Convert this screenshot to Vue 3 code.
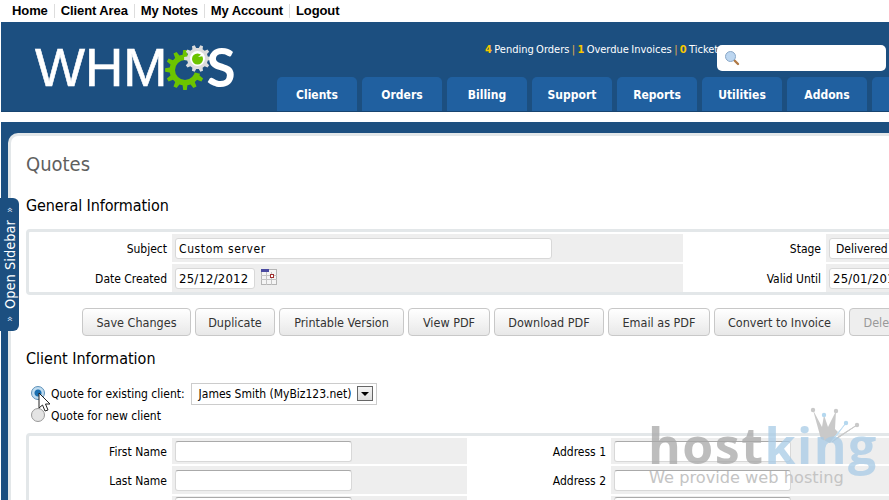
<script setup>
const topLinks = ['Home', 'Client Area', 'My Notes', 'My Account', 'Logout']
const tabs = ['Clients', 'Orders', 'Billing', 'Support', 'Reports', 'Utilities', 'Addons', '']
const buttons = [
  { t: 'Save Changes', w: 109 }, { t: 'Duplicate', w: 80 }, { t: 'Printable Version', w: 125 },
  { t: 'View PDF', w: 82 }, { t: 'Download PDF', w: 110 }, { t: 'Email as PDF', w: 102 },
  { t: 'Convert to Invoice', w: 131 }, { t: 'Delete', w: 66, off: true }
]
function gear(cx, cy, ro, ri, n) {
  let d = ''
  const step = (Math.PI * 2) / n
  for (let i = 0; i < n; i++) {
    const a = i * step
    const pts = [[a - step * 0.3, ri], [a - step * 0.17, ro], [a + step * 0.17, ro], [a + step * 0.3, ri]]
    for (const [an, r] of pts) {
      d += (d ? 'L' : 'M') + (cx + r * Math.cos(an)).toFixed(1) + ' ' + (cy + r * Math.sin(an)).toFixed(1)
    }
  }
  return d + 'Z'
}
const greenGear = gear(24, 31, 20, 15.5, 12)
const grayGear = gear(36.5, 19.5, 13.5, 10.5, 10)
</script>

<template>
  <div class="page">
    <nav class="top">
      <a v-for="l in topLinks" :key="l">{{ l }}</a>
    </nav>
    <header class="head">
      <div class="logo">
        <span class="whm">WHM</span>
        <svg class="gears" width="56" height="56" viewBox="0 0 56 56">
          <path :d="greenGear" fill="#6cc400" />
          <circle cx="24" cy="31" r="10" fill="#1c4f80" />
          <path d="M24 31L44 8L54 30L44 36Z" fill="#1c4f80" />
          <path :d="grayGear" fill="#dcdcdc" />
          <circle cx="36.5" cy="19.5" r="7.5" fill="#fff" />
          <circle cx="36.5" cy="20" r="5.5" fill="#6cc400" />
          <path d="M37 18L42 14L43 17Z" fill="#fff" />
        </svg>
        <span class="s">S</span>
      </div>
      <div class="right">
        <div class="stats">
          <b>4</b> Pending Orders <i>|</i> <b>1</b> Overdue Invoices <i>|</i> <b>0</b> Tickets Awaiting Reply
        </div>
        <div class="tabs">
          <a v-for="t in tabs" :key="t" class="tab">{{ t }}</a>
        </div>
      </div>
    </header>
    <div class="search">
      <svg width="16" height="16" viewBox="0 0 16 16">
        <line x1="9.5" y1="9.5" x2="14" y2="14" stroke="#b07a45" stroke-width="2.4" stroke-linecap="round" />
        <circle cx="6.5" cy="6.5" r="5" fill="#bcd6f0" stroke="#8aa8c8" />
      </svg>
    </div>

    <main class="frame">
      <div class="panel">
        <h1>Quotes</h1>
        <h2 class="first">General Information</h2>
        <div class="box general">
          <div class="lab">Subject</div>
          <div class="cell"><div class="inp wide">Custom server</div></div>
          <div class="lab">Stage</div>
          <div class="cell"><div class="inp sel">Delivered</div></div>
          <div class="lab">Date Created</div>
          <div class="cell">
            <div class="inp date">25/12/2012</div>
            <svg class="cal" width="16" height="16" viewBox="0 0 16 16">
              <rect x="0.5" y="0.5" width="15" height="15" fill="#f4f4f4" stroke="#b5b5b5" />
              <rect x="0" y="0" width="8" height="3" fill="#4a4aa0" />
              <path d="M0 6.5H16M0 10.5H16M5.5 3V16M10.5 3V16" stroke="#c4c4c4" />
              <rect x="9.5" y="5.5" width="3" height="3" fill="#fff" stroke="#a03030" />
            </svg>
          </div>
          <div class="lab">Valid Until</div>
          <div class="cell"><div class="inp date2">25/01/2013</div></div>
        </div>

        <div class="btns">
          <button v-for="b in buttons" :key="b.t" class="btn" :class="{ off: b.off }" :style="{ width: b.w + 'px' }">{{ b.t }}</button>
        </div>

        <h2 class="second">Client Information</h2>
        <div class="radio-row first-r">
          <span class="radio on"></span>
          <span>Quote for existing client:</span>
          <div class="select">
            James Smith (MyBiz123.net)
            <span class="arrow"></span>
          </div>
        </div>
        <div class="radio-row">
          <span class="radio"></span>
          <span>Quote for new client</span>
        </div>

        <div class="box client">
          <div class="lab">First Name</div>
          <div class="cell"><div class="inp name"></div></div>
          <div class="lab">Address 1</div>
          <div class="cell"><div class="inp name"></div></div>
          <div class="lab">Last Name</div>
          <div class="cell"><div class="inp name"></div></div>
          <div class="lab">Address 2</div>
          <div class="cell"><div class="inp name"></div></div>
          <div class="lab"></div>
          <div class="cell low"><div class="inp name"></div></div>
          <div class="lab"></div>
          <div class="cell low"><div class="inp name"></div></div>
        </div>
      </div>
    </main>

    <div class="side">
      <span class="mini">»</span><span class="side-t">Open Sidebar</span><span class="mini">»</span>
    </div>

    <svg class="cursor" width="14" height="22" viewBox="0 0 14 22">
      <path d="M1 1V16L4.5 13L7 19L10 18L7.5 12H12Z" fill="#fff" stroke="#222" stroke-width="1" stroke-linejoin="round" />
    </svg>

    <div class="mark">
      <svg class="crown" width="54" height="38" viewBox="0 0 54 38">
        <path d="M5 3L14 20L16 8L20 20L28 4L27 22L30 25L22 36L13 32Z" fill="#c9c9c9" />
        <path d="M38 16L24 33L29 28Z" fill="#c3dff2" stroke="#c3dff2" />
        <path d="M49 18L24 35L30 30Z" fill="#c9c9c9" stroke="#c9c9c9" />
        <circle cx="5" cy="3" r="2.2" fill="#c9c9c9" />
        <circle cx="16" cy="8" r="2.2" fill="#b5d8ef" />
        <circle cx="28" cy="4" r="2.2" fill="#c9c9c9" />
        <circle cx="38" cy="16" r="2.2" fill="#b5d8ef" />
        <circle cx="49" cy="18" r="2.2" fill="#c9c9c9" />
      </svg>
      <div class="mark-name"><span class="g">host</span><span class="b">king</span></div>
      <div class="mark-tag">We provide web hosting</div>
    </div>
  </div>
</template>

<style>
html, body { margin: 0; overflow: hidden; background: #fff; }
</style>

<style scoped>
.page {
  width: 889px; height: 500px; overflow: hidden; position: relative; background: #fff;
  font-family: "DejaVu Sans Condensed", "DejaVu Sans", sans-serif; font-stretch: condensed; font-size: 12px; color: #000;
}
.top { height: 22px; display: flex; align-items: center; padding-left: 12px; font-family: "Liberation Sans", sans-serif; font-stretch: normal; font-weight: 700; font-size: 13px; letter-spacing: -0.1px; }
.top a { padding-right: 6px; margin-right: 6px; border-right: 1px solid #ddd; line-height: 14px; }
.top a:last-child { border: 0; }
.head { margin-left: 1px; height: 90px; background: #1c4f80; display: flex; width: 1000px; box-sizing: border-box; border-bottom: 1px solid #174470; }
.logo { width: 276px; flex: none; display: flex; align-items: center; padding-left: 34px; box-sizing: border-box; color: #fff; line-height: 1; height: 90px; }
.whm { font: 400 53px/1 "Liberation Sans", sans-serif; -webkit-text-stroke: 0.6px #fff; }
.s { font: 700 53px/1 "Lato", sans-serif; margin-bottom: 2px; }
.gears { margin: 0 -11px 0 -6px; flex: none; }
.right { flex: 1; display: flex; flex-direction: column; }
.stats { height: 55px; padding: 21px 0 0 208px; box-sizing: border-box; color: #fff; font-size: 11px; word-spacing: -0.8px; white-space: nowrap; line-height: 13px; }
.stats b { color: #f7c600; }
.stats i { font-style: normal; color: #e0b050; }
.tabs { display: flex; gap: 5px; }
.tab { width: 80px; height: 34px; flex: none; background: #2060a0; border-radius: 5px 5px 0 0; color: #fff; text-align: center; font-weight: 700; font-size: 12px; line-height: 37px; }
.search { position: absolute; left: 717px; top: 45px; width: 169px; height: 26px; background: #fff; border-radius: 5px; display: flex; align-items: center; padding-left: 7px; box-sizing: border-box; }
.frame { margin: 10px 0 0 1px; padding: 11px 0 0 7px; background: #1c4f80; height: 378px; box-sizing: border-box; }
.panel { height: 380px; background: #fff; border: 3px solid #e3e7e9; border-right: 0; border-bottom: 0; border-radius: 10px 0 0 0; padding: 0 0 0 15px; width: 900px; box-sizing: border-box; }
h1 { margin: 0; padding-top: 16px; font-weight: 400; font-size: 20px; line-height: 24px; color: #60605e; }
h2 { margin: 0; font-weight: 400; font-size: 16px; line-height: 20px; color: #000; }
h2.first { margin-top: 20px; letter-spacing: -0.1px; }
h2.second { margin-top: 13px; }
.box { border: 3px solid #e3e7e9; border-radius: 4px; display: grid; row-gap: 2px; padding: 2px 0; width: 900px; box-sizing: border-box; }
.general { grid-template-columns: 143px 511px 143px 100px; grid-template-rows: 28px 28px; margin-top: 13px; height: 66px; }
.client { grid-template-columns: 143px 295px 144px 320px; grid-template-rows: 26px 28px 28px; margin-top: 7px; }
.lab { display: flex; align-items: center; justify-content: flex-end; padding: 1px 5px 0 0; white-space: nowrap; }
.cell { background: #eee; display: flex; align-items: center; padding-left: 3px; }
.cell.low { align-items: flex-start; padding-top: 1px; }
.inp { height: 21px; box-sizing: border-box; background: #fff; border: 1px solid #d8d8d8; border-radius: 3px; padding: 0 3px; font-size: 13px; letter-spacing: 0.2px; line-height: 20px; flex: none; white-space: nowrap; }
.wide { width: 377px; font-size: 12px; letter-spacing: 0.6px; }
.sel { width: 90px; font-size: 12px; letter-spacing: 0; padding-left: 6px; }
.date { width: 80px; }
.date2 { width: 90px; }
.name { width: 177px; border-top-color: #aaa; }
.cal { margin-left: 6px; margin-top: -3px; }
.btns { display: flex; gap: 4px; margin: 13px 0 0 56px; }
.btn { height: 28px; flex: none; padding: 0; border: 1px solid #c8c8c8; border-radius: 4px; background: linear-gradient(#fff, #e8e8e8); font: inherit; font-size: 12.5px; color: #333; }
.btn.off { color: #999; background: #eee; }
.radio-row { display: flex; align-items: center; gap: 6px; margin-left: 5px; height: 21px; }
.first-r { margin-top: 13px; height: 23px; }
.radio { width: 12px; height: 12px; border-radius: 50%; border: 1px solid #999; background: #e4e4e4; flex: none; margin-bottom: 2px; }
.radio.on { background: radial-gradient(circle, #1a6fb0 0 3px, #c0dcf0 4px); border-color: #5a8fb8; }
.select { margin-left: 0; height: 22px; width: 186px; box-sizing: border-box; border: 1px solid #ccc; display: flex; align-items: center; padding: 0 3px 0 7px; justify-content: space-between; white-space: nowrap; background: #fff; }
.arrow { width: 16px; height: 15px; box-sizing: border-box; border: 1px solid #666; background: linear-gradient(#f4f4f4, #ddd); position: relative; flex: none; }
.arrow::after { content: ""; position: absolute; left: 3px; top: 5px; border: 4px solid transparent; border-top: 4px solid #000; border-bottom: 0; }
.side { position: absolute; left: 0; top: 198px; width: 19px; height: 133px; background: #1c4f80; border-radius: 6px 0 0 6px; color: #fff; writing-mode: vertical-rl; transform: rotate(180deg); display: flex; align-items: center; justify-content: center; gap: 7px; font-size: 14.5px; }
.mini { font-size: 11px; color: #cde; }
.cursor { position: absolute; left: 38px; top: 392px; }
.mark { position: absolute; left: 648px; top: 407px; width: 230px; height: 90px; pointer-events: none; }
.crown { position: absolute; left: 160px; top: 0; }
.mark-name { position: absolute; left: 0; top: 8px; font: 700 50px/60px "Open Sans", sans-serif; font-stretch: normal; letter-spacing: 1.5px; white-space: nowrap; opacity: 0.75; }
.mark-name .g { color: #a8a8a8; }
.mark-name .b { color: #a8cbe6; }
.mark-tag { position: absolute; left: 1px; top: 60px; font: 400 16.2px/22px "DejaVu Sans", sans-serif; font-stretch: normal; color: #c4c4c4; white-space: nowrap; }
</style>
